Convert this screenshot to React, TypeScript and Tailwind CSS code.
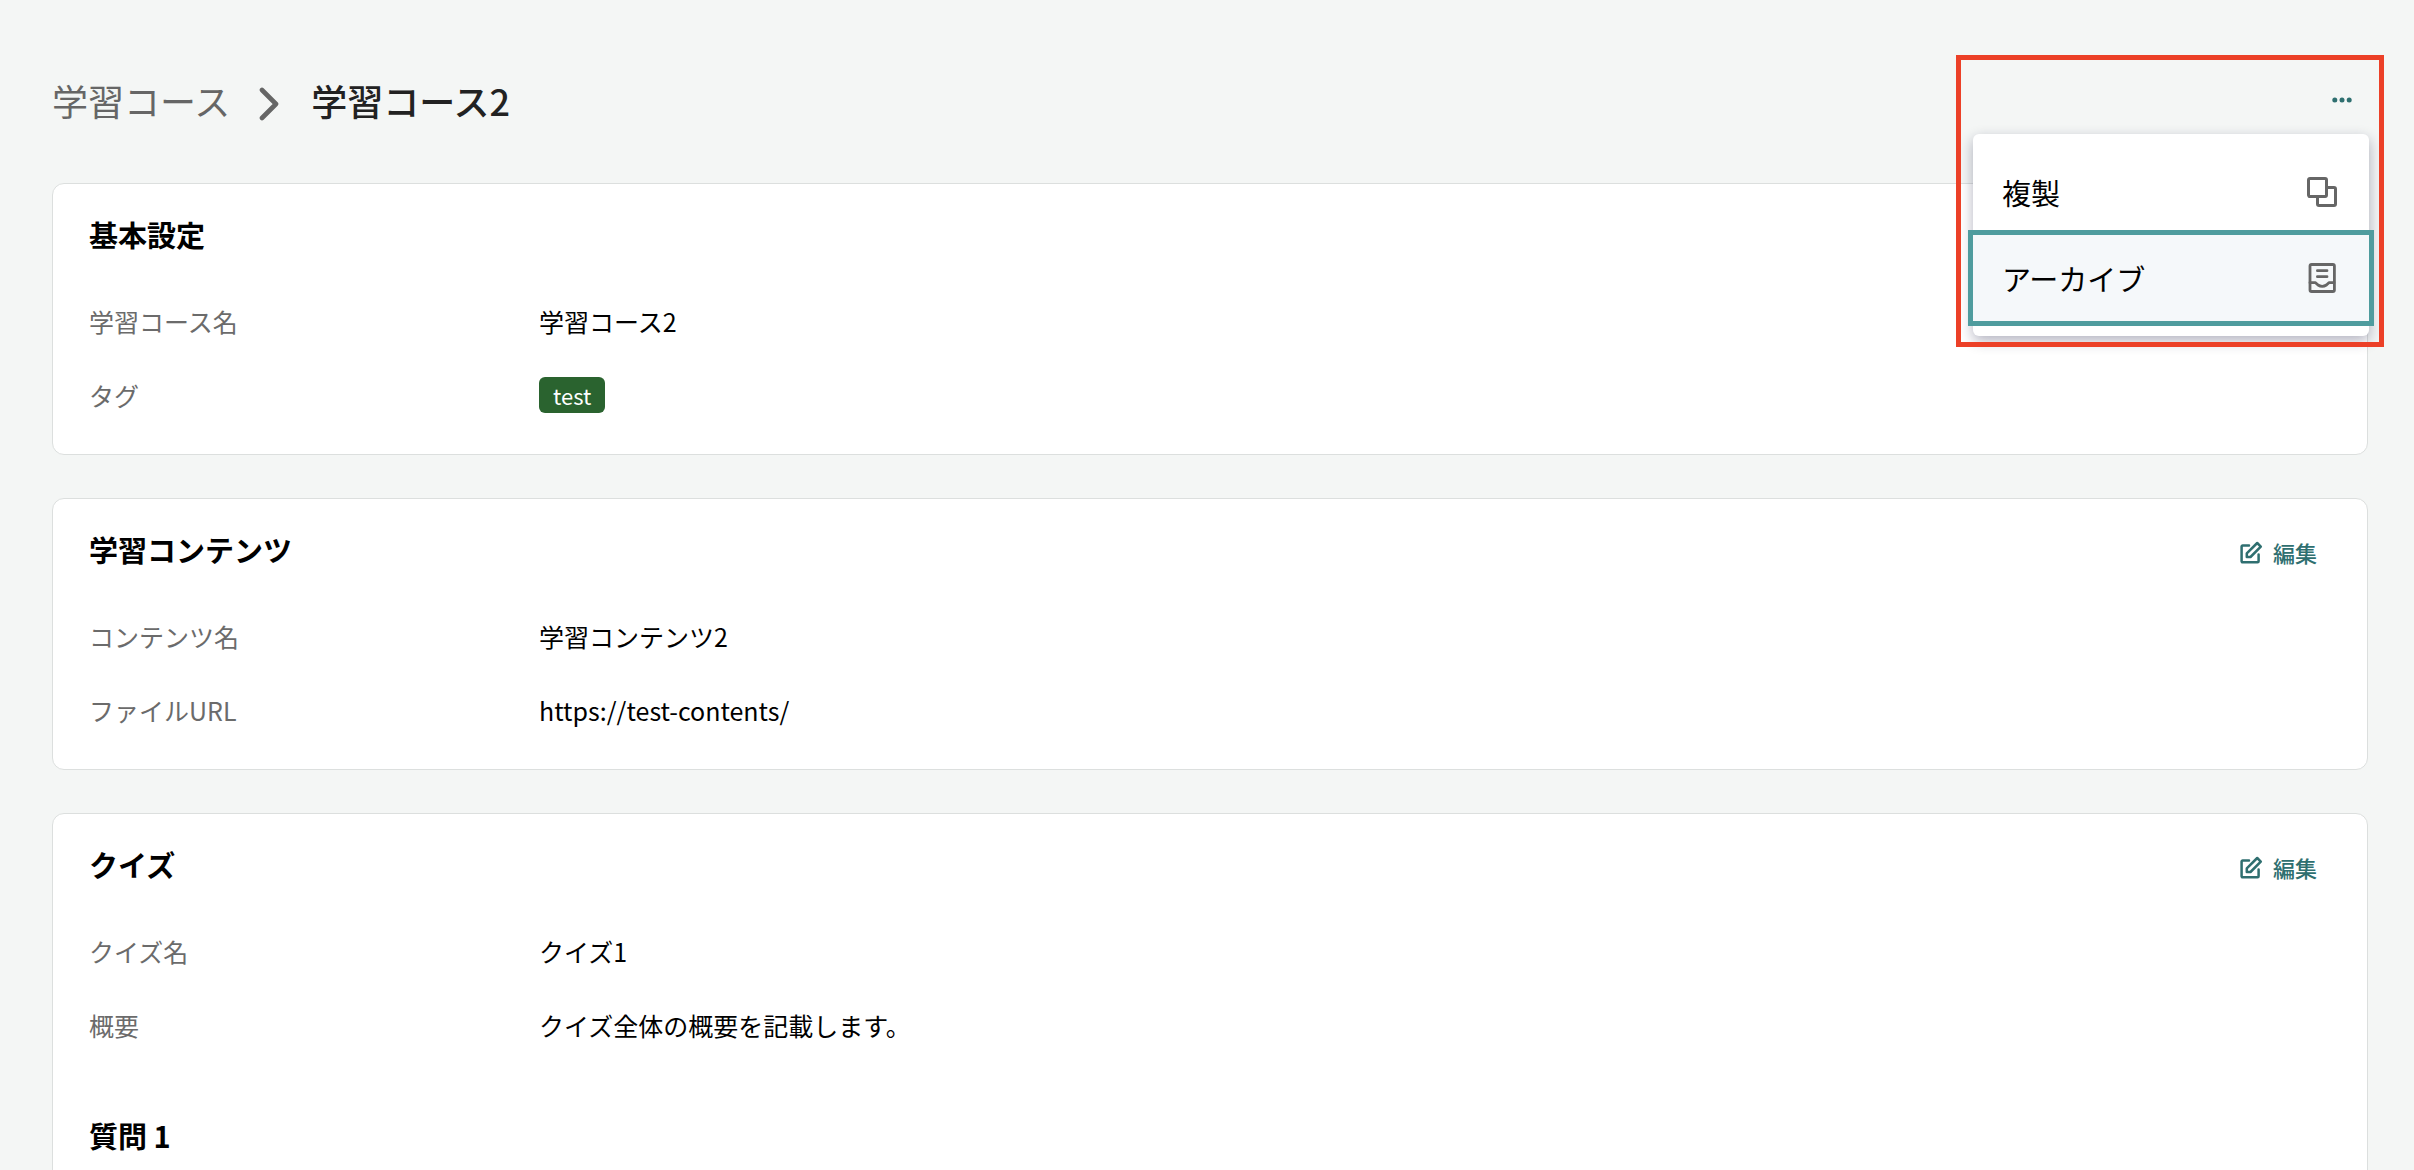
import type { ReactNode } from 'react'

type Field = {
  label: string
  value: ReactNode
}

function ChevronIcon() {
  return (
    <svg className="h-9 w-6" viewBox="0 0 24 36" fill="none" stroke="#666" strokeWidth="4.6" strokeLinecap="round" strokeLinejoin="round" aria-hidden="true">
      <path d="M5 5L19 19L5 33" />
    </svg>
  )
}

function CopyIcon() {
  return (
    <svg className="h-9 w-9" viewBox="0 0 36 36" fill="none" stroke="#666" strokeWidth="3" strokeLinejoin="round" aria-hidden="true">
      <rect x="4.5" y="4.5" width="18" height="18" rx="1.4" />
      <path d="M22.5 13.5H30A1.5 1.5 0 0 1 31.5 15V30A1.5 1.5 0 0 1 30 31.5H15A1.5 1.5 0 0 1 13.5 30V22.5" />
    </svg>
  )
}

function ArchiveIcon() {
  return (
    <svg className="h-9 w-9" viewBox="0 0 36 36" fill="none" stroke="#666" strokeWidth="2.8" strokeLinecap="round" strokeLinejoin="round" aria-hidden="true">
      <rect x="6" y="4.5" width="24.4" height="27" rx="1.6" />
      <path d="M13.4 10.7H23M13.4 16.7H23" />
      <path d="M6 22.7H11.5L14 25Q18.2 27.8 22.4 25L24.9 22.7H30" />
    </svg>
  )
}

function EditIcon() {
  return (
    <svg className="h-6 w-6" viewBox="-1 -2 24 24" fill="none" stroke="currentColor" strokeWidth="2.5" strokeLinecap="round" strokeLinejoin="round" aria-hidden="true">
      <path d="M9 3.5H2.6A1 1 0 0 0 1.6 4.5V19.3A1 1 0 0 0 2.6 20.3H17.6A1 1 0 0 0 18.6 19.3V12.5" />
      <path d="M6.8 11.4L17.2 1L20.8 4.6L10.5 15H6.8Z" />
    </svg>
  )
}

function Card({ title, fields, editable, children }: { title: string; fields: Field[]; editable?: boolean; children?: ReactNode }) {
  return (
    <section className="shrink-0 rounded-xl border border-[#dcdfde] bg-white px-9 pt-7 pb-[41px]">
      <div className="flex h-11 items-center justify-between">
        <h2 className="text-[29px] leading-[44px] font-bold">{title}</h2>
        {editable && (
          <button type="button" className="mt-1.5 flex items-center gap-2.5 px-3.5 text-[22px] leading-8 font-medium text-[#2f6f70]">
            <EditIcon />
            編集
          </button>
        )}
      </div>
      <dl className="mt-[47px] flex flex-col gap-[38px] text-[25px] leading-9">
        {fields.map((field) => (
          <div key={field.label} className="flex">
            <dt className="w-[450px] shrink-0 text-[#6b6b6b]">{field.label}</dt>
            <dd className="flex">{field.value}</dd>
          </div>
        ))}
      </dl>
      {children}
    </section>
  )
}

function ActionMenu() {
  return (
    <div className="relative -mr-px">
      <button type="button" aria-label="メニュー" className="flex h-[54px] w-[54px] items-center justify-center text-[#2f6f70]">
        <svg className="h-6 w-6" viewBox="0 0 24 24" fill="currentColor" aria-hidden="true">
          <circle cx="4.8" cy="12" r="2.5" />
          <circle cx="12" cy="12" r="2.5" />
          <circle cx="19.2" cy="12" r="2.5" />
        </svg>
      </button>
      <div role="menu" className="absolute top-[61px] right-0 z-10 w-[396px] rounded-md bg-white py-[15px] text-[29px] leading-[44px] shadow-[0_5px_14px_rgba(20,20,60,0.32)]">
        <button type="button" role="menuitem" className="flex h-[86px] w-full items-center justify-between px-[29px]">
          複製
          <CopyIcon />
        </button>
        <button type="button" role="menuitem" className="flex h-[86px] w-full items-center justify-between bg-[#f5f8fa] px-[29px] outline-[5px] outline-[#4f9c9e] outline-solid">
          アーカイブ
          <ArchiveIcon />
        </button>
      </div>
      <div className="pointer-events-none absolute -top-[18px] -right-[15px] z-20 h-[292px] w-[428px] border-[5px] border-[#ec4027]" />
    </div>
  )
}

export default function App() {
  return (
    <main className="flex h-screen flex-col overflow-hidden bg-[#f4f6f5] pt-[73px] pr-[46px] pl-[52px] font-['Noto_Sans_CJK_JP',sans-serif] text-black">
      <header className="mb-14 flex h-[54px] shrink-0 items-start justify-between">
        <nav aria-label="breadcrumb" className="flex items-center text-[36px] leading-[54px]">
          <a href="#courses" className="text-[#666]">
            学習コース
          </a>
          <span className="mt-1.5 ml-[27px] mr-[30px]">
            <ChevronIcon />
          </span>
          <h1 className="font-medium text-[#222]">学習コース2</h1>
        </nav>
        <ActionMenu />
      </header>

      <div className="flex flex-col gap-[43px]">
        <Card
          title="基本設定"
          fields={[
            { label: '学習コース名', value: '学習コース2' },
            {
              label: 'タグ',
              value: <span className="rounded-md bg-[#2a632f] px-3.5 text-[22px] text-white">test</span>,
            },
          ]}
        />
        <Card
          title="学習コンテンツ"
          editable
          fields={[
            { label: 'コンテンツ名', value: '学習コンテンツ2' },
            { label: 'ファイルURL', value: 'https://test-contents/' },
          ]}
        />
        <Card
          title="クイズ"
          editable
          fields={[
            { label: 'クイズ名', value: 'クイズ1' },
            { label: '概要', value: 'クイズ全体の概要を記載します。' },
          ]}
        >
          <h3 className="mt-[70px] text-[29px] leading-[44px] font-bold">質問 1</h3>
        </Card>
      </div>
    </main>
  )
}
